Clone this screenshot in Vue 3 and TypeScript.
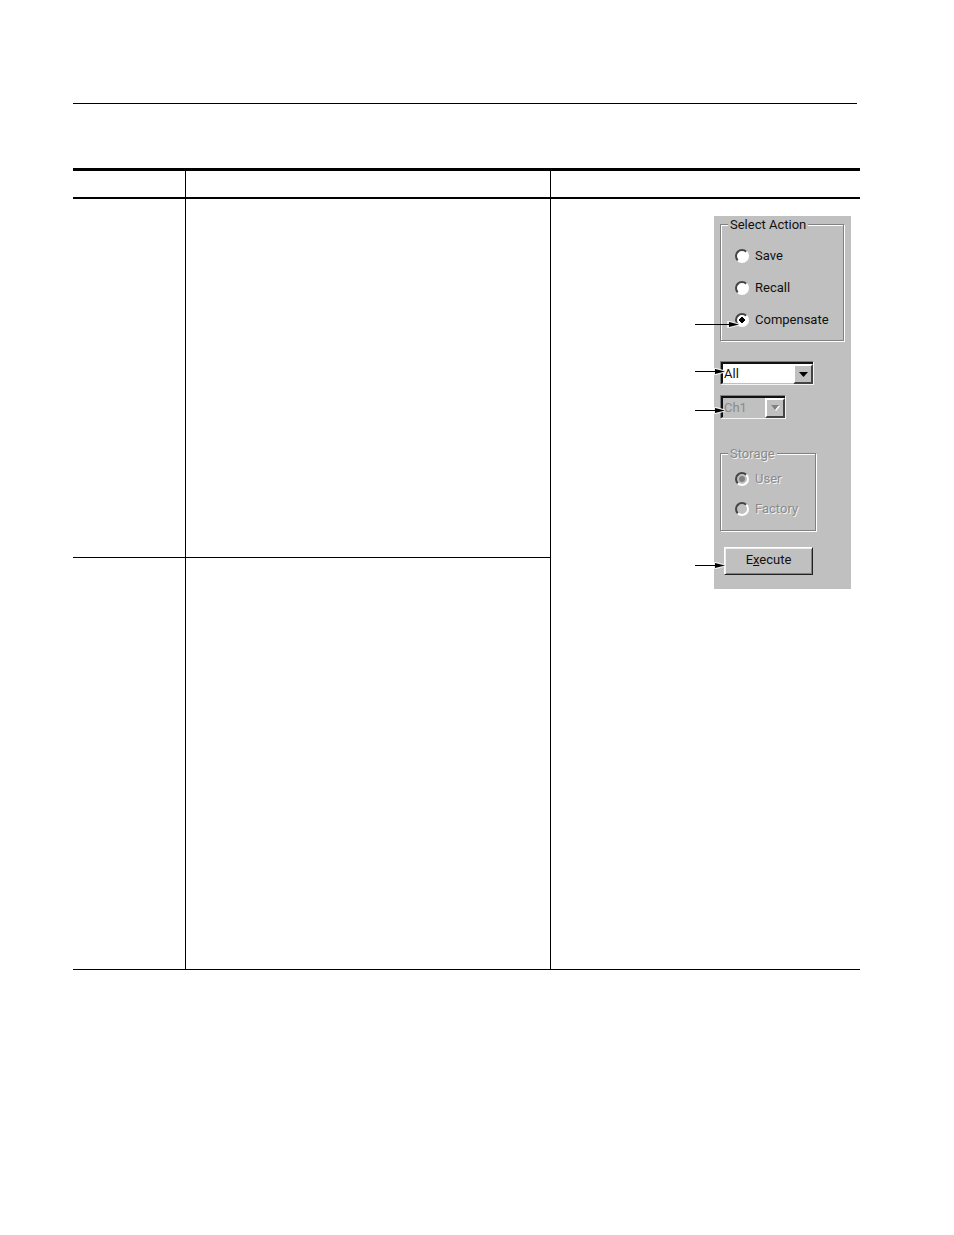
<script setup lang="ts">
import { ref } from 'vue'

const action = ref<string>('Compensate')
const actions: string[] = ['Save', 'Recall', 'Compensate']
const storage = ref<string>('User')
const storages: string[] = ['User', 'Factory']
const scope = ref<string>('All')
const channel = ref<string>('Ch1')
</script>

<template>
  <main class="page">
    <hr class="rule" />
    <table class="sheet">
      <colgroup>
        <col class="c1" />
        <col class="c2" />
        <col />
      </colgroup>
      <thead>
        <tr class="head">
          <th class="line"></th>
          <th class="line"></th>
          <th></th>
        </tr>
      </thead>
      <tbody>
        <tr class="first">
          <td class="line"></td>
          <td class="line"></td>
          <td rowspan="2" class="figure">
            <form class="panel" @submit.prevent>
              <fieldset class="group actions">
                <legend>Select Action</legend>
                <label v-for="a in actions" :key="a" class="option">
                  <input v-model="action" type="radio" name="action" :value="a" />
                  <span>{{ a }}</span>
                  <svg v-if="a === 'Compensate'" class="arrow long" width="44" height="7" viewBox="0 0 44 7" aria-hidden="true">
                    <path class="halo" d="M33 0.5L44 3.5L33 6.5Z" />
                    <path class="shaft" d="M0 3.5H36" />
                    <path d="M34 1L44 3.5L34 6Z" />
                  </svg>
                </label>
              </fieldset>

              <div class="combo scope">
                <select v-model="scope" aria-label="Scope"><option>All</option></select>
                <span class="drop"><svg width="9" height="5" viewBox="0 0 9 5"><path d="M0 0H9L4.5 5Z" /></svg></span>
                <svg class="arrow" width="30" height="7" viewBox="0 0 30 7" aria-hidden="true">
                  <path class="halo" d="M20 0.5L30 3.5L20 6.5Z" />
                  <path class="shaft" d="M0 3.5H22" />
                  <path d="M20 1L30 3.5L20 6Z" />
                </svg>
              </div>

              <div class="combo channel">
                <select v-model="channel" aria-label="Channel" disabled><option>Ch1</option></select>
                <span class="drop"><svg width="9" height="6" viewBox="0 0 9 6"><path class="light" d="M1 1H9L5 6Z" /><path class="dim" d="M0 0H8L4 5Z" /></svg></span>
                <svg class="arrow" width="30" height="7" viewBox="0 0 30 7" aria-hidden="true">
                  <path class="halo" d="M20 0.5L30 3.5L20 6.5Z" />
                  <path class="shaft" d="M0 3.5H22" />
                  <path d="M20 1L30 3.5L20 6Z" />
                </svg>
              </div>

              <fieldset class="group storage" disabled>
                <legend>Storage</legend>
                <label v-for="s in storages" :key="s" class="option">
                  <input v-model="storage" type="radio" name="storage" :value="s" />
                  <span>{{ s }}</span>
                </label>
              </fieldset>

              <div class="run">
                <button type="submit">E<u>x</u>ecute</button>
                <svg class="arrow" width="30" height="7" viewBox="0 0 30 7" aria-hidden="true">
                  <path class="halo" d="M20 0.5L30 3.5L20 6.5Z" />
                  <path class="shaft" d="M0 3.5H22" />
                  <path d="M20 1L30 3.5L20 6Z" />
                </svg>
              </div>
            </form>
          </td>
        </tr>
        <tr class="second">
          <td class="line"></td>
          <td class="line"></td>
        </tr>
      </tbody>
    </table>
  </main>
</template>

<style>
body {
  background: #fff;
}
</style>

<style scoped>
.page {
  box-sizing: border-box;
  padding: 103px 94px 64px 73px;
  font-family: Roboto, "Liberation Sans", sans-serif;
  font-size: 13px;
  line-height: 16px;
  color: #111;
}
.rule {
  height: 1px;
  margin: 0 3px 64px 0;
  border: 0;
  background: #000;
}
.sheet {
  width: 100%;
  table-layout: fixed;
  border-collapse: separate;
  border-spacing: 0;
  border-top: 3px solid #000;
}
.c1 { width: 113px; }
.c2 { width: 365px; }
th, td {
  box-sizing: border-box;
  padding: 0;
  border-bottom: 1px solid #000;
}
th { border-bottom-width: 2px; }
.line { border-right: 1px solid #000; }
.head th { height: 28px; }
.first td { height: 359px; }
.second td { height: 412px; }
.figure {
  vertical-align: top;
  padding: 17px 9px 0 0;
}
.panel {
  box-sizing: border-box;
  width: 137px;
  margin-left: auto;
  padding: 1px 6px 14px;
  background: #c0c0c0;
}
.group {
  box-sizing: border-box;
  min-width: 0;
  margin: 0;
  border: 1px solid #808080;
  box-shadow: 1px 1px 0 #fff, inset 1px 1px 0 #fff;
}
.group legend {
  margin-left: 7px;
  padding: 0 2px;
  line-height: 15px;
  background: #c0c0c0;
}
.actions {
  width: 124px;
  height: 124px;
  padding: 16px 0 0;
}
.storage {
  width: 96px;
  height: 85px;
  margin-top: 27px;
  padding: 10px 0 0;
  color: #8a8a8a;
  text-shadow: 1px 1px 0 #f4f4f4;
}
.option {
  position: relative;
  display: flex;
  align-items: center;
  gap: 6px;
  height: 16px;
  margin-left: 14px;
}
.actions .option + .option { margin-top: 16px; }
.storage .option + .option { margin-top: 14px; }
.option input {
  display: grid;
  place-items: center;
  box-sizing: border-box;
  width: 14px;
  height: 14px;
  margin: 0;
  appearance: none;
  border: 2px solid;
  border-color: #444 #fff #fff #444;
  border-radius: 50%;
  background: #fff;
}
.option input:disabled { background: #c0c0c0; }
.option input:checked::before {
  content: "";
  width: 6px;
  height: 6px;
  background: linear-gradient(#000, #000) center / 6px 2px no-repeat,
    linear-gradient(#000, #000) center / 2px 6px no-repeat,
    linear-gradient(#000, #000) center / 4px 4px no-repeat;
}
.option input:disabled:checked::before {
  background: #808080;
  border-radius: 50%;
}
.combo {
  position: relative;
  display: flex;
  box-sizing: border-box;
  height: 24px;
  border: 1px solid;
  border-color: #808080 #f4f4f4 #f4f4f4 #808080;
}
.scope {
  width: 94px;
  margin-top: 20px;
}
.channel {
  width: 66px;
  margin-top: 10px;
}
.combo select {
  box-sizing: border-box;
  flex: 1;
  min-width: 0;
  padding: 0 1px;
  appearance: none;
  border: 2px solid;
  border-color: #111 #c0c0c0 #c0c0c0 #111;
  border-right: 0;
  border-bottom-width: 1px;
  border-radius: 0;
  background: #fff;
  font: inherit;
  color: #111;
}
.combo select:disabled {
  background: #c0c0c0;
  color: #8a8a8a;
  opacity: 1;
}
.drop {
  display: grid;
  place-items: center;
  box-sizing: border-box;
  width: 20px;
  margin-top: 2px;
  border: 2px solid;
  border-color: #fff #444 #444 #fff;
  background: #c0c0c0;
  pointer-events: none;
}
.combo::after {
  content: "";
  position: absolute;
  top: 0;
  right: 0;
  width: 20px;
  height: 2px;
  background: #111;
}
.light { fill: #fff; }
.dim { fill: #808080; }
.run {
  position: relative;
  width: 89px;
  margin: 16px 0 0 4px;
}
.run button {
  display: block;
  box-sizing: border-box;
  width: 100%;
  height: 28px;
  padding: 0 0 2px;
  border: 1px solid;
  border-color: #fff #222 #222 #fff;
  border-radius: 0;
  background: #c0c0c0;
  box-shadow: inset 1px 1px 0 #eee, inset -1px -1px 0 #808080;
  font: inherit;
  color: #111;
}
.arrow {
  position: absolute;
  left: -26px;
  top: 6px;
}
.channel .arrow { top: 11px; }
.run .arrow {
  left: -29px;
  top: 15px;
}
.arrow.long {
  left: -40px;
  top: 9px;
}
.shaft { stroke: #000; }
.halo {
  fill: #fff;
  stroke: #eee;
  stroke-width: 2;
}
</style>
